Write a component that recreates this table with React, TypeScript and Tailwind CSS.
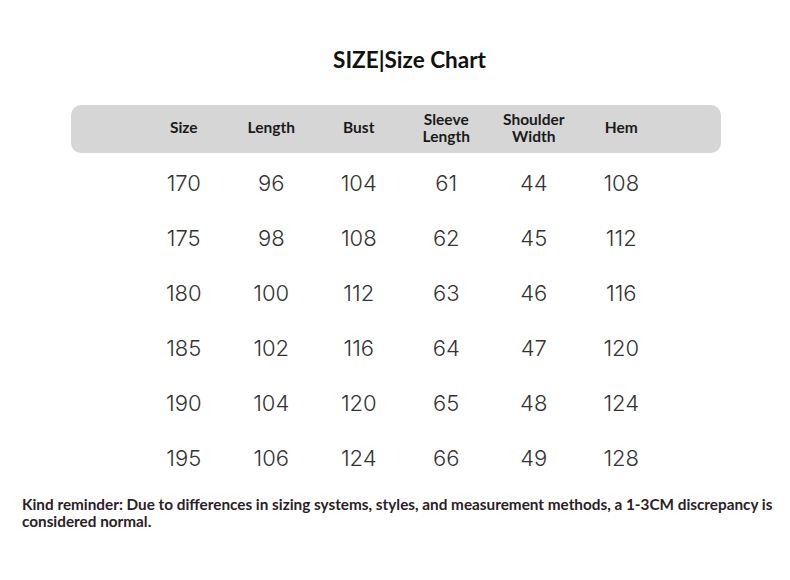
const headers = [["Size"], ["Length"], ["Bust"], ["Sleeve", "Length"], ["Shoulder", "Width"], ["Hem"]];

const rows = [
  [170, 96, 104, 61, 44, 108],
  [175, 98, 108, 62, 45, 112],
  [180, 100, 112, 63, 46, 116],
  [185, 102, 116, 64, 47, 120],
  [190, 104, 120, 65, 48, 124],
  [195, 106, 124, 66, 49, 128],
];

const App = () => {
  return (
    <div className="w-[790px] h-[580px] bg-white overflow-hidden font-['Lato','Liberation_Sans',sans-serif]">
      {/* Title */}
      <h1 className="pt-[45px] h-[105px] text-center text-[22.5px] leading-[30px] font-bold text-[#111] pl-[29px]">
        SIZE|Size Chart
      </h1>

      {/* Header bar */}
      <div className="ml-[71px] w-[650px] h-[48px] pb-[3px] rounded-[10px] bg-[#d6d6d6] flex items-center">
        <div className="ml-[69px] w-[525px] grid grid-cols-6 items-center">
          {headers.map((h, i) => (
            <div key={i} className="text-center text-[15.5px] leading-[17px] font-bold text-[#1a1a1a]">
              {h.map((line) => (
                <div key={line}>{line}</div>
              ))}
            </div>
          ))}
        </div>
      </div>

      {/* Data rows */}
      <div className="ml-[140px] w-[525px] pt-[3px]">
        {rows.map((r, i) => (
          <div key={i} className="grid grid-cols-6 h-[55px] items-center">
            {r.map((v, j) => (
              <div key={j} className="text-center text-[22px] font-light font-['Inter','Liberation_Sans',sans-serif] text-[#333]">
                {v}
              </div>
            ))}
          </div>
        ))}
      </div>

      {/* Footer note */}
      <p className="mt-[10px] pl-[22px] pr-[12px] text-[15.3px] leading-[17px] font-bold text-[#2b2126]">
        Kind reminder: Due to differences in sizing systems, styles, and measurement methods, a 1-3CM discrepancy is considered normal.
      </p>
    </div>
  );
};

export default App;
